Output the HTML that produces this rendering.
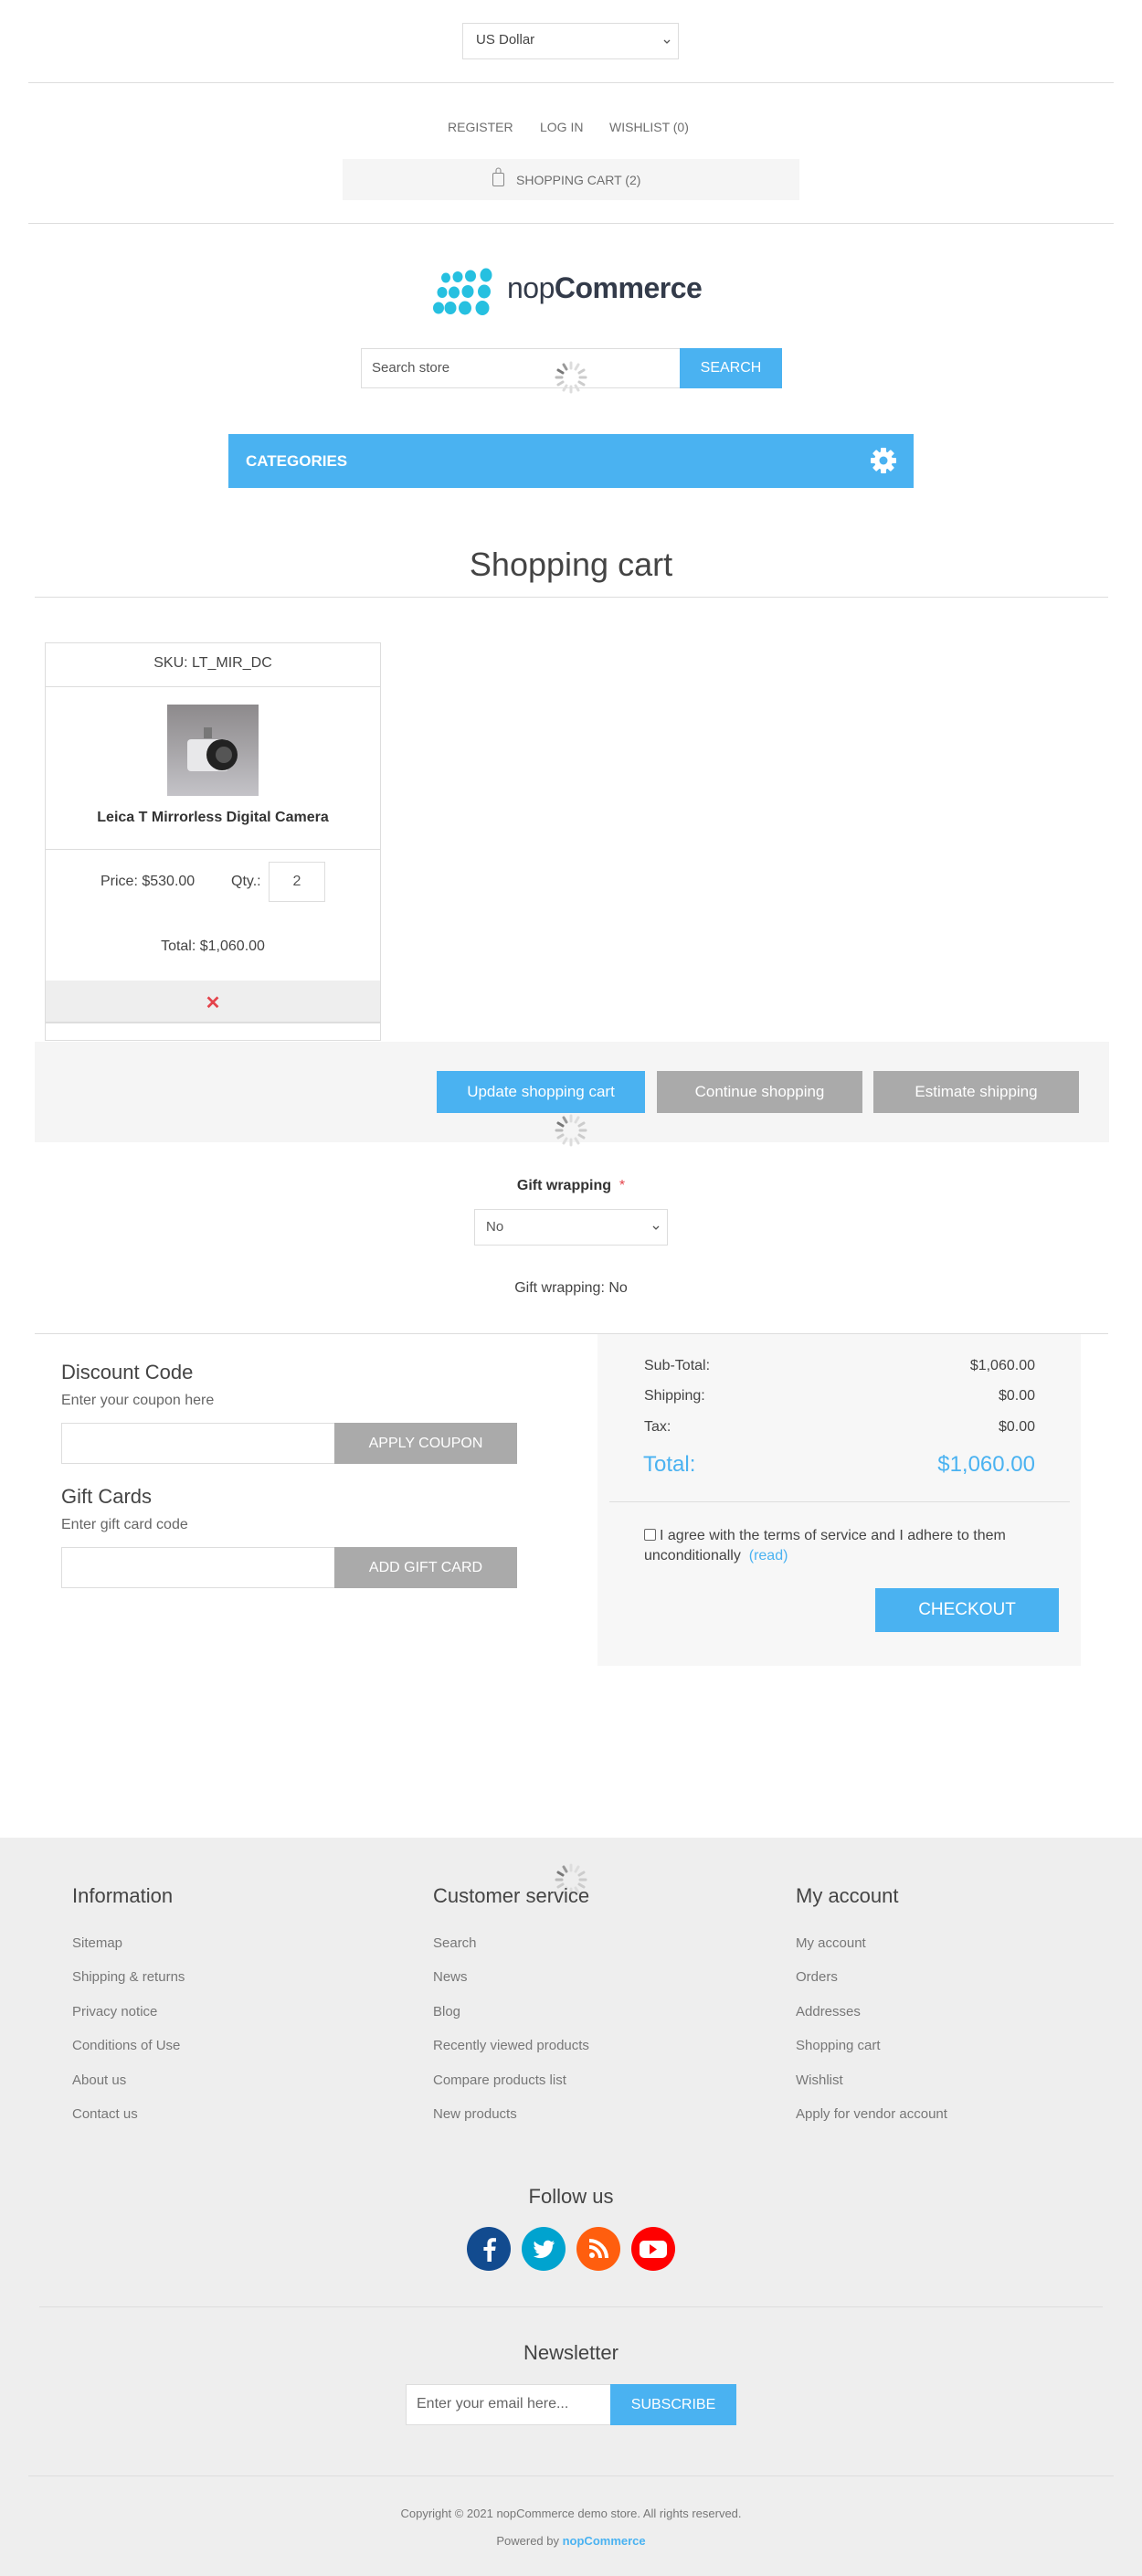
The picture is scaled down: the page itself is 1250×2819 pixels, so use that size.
<!DOCTYPE html>
<html><head><meta charset="utf-8"><style>
*{box-sizing:border-box;margin:0;padding:0}
body{width:1250px;height:2819px;position:relative;background:#fff;font-family:"Liberation Sans",Arial,sans-serif;color:#444;font-size:14px;overflow:hidden}
.a{position:absolute}
.hr{position:absolute;height:1px;background:#ddd}
.c{text-align:center}
.btn{position:absolute;color:#fff;display:flex;align-items:center;justify-content:center;font-size:15px}
.blue{background:#4ab2f1}
.grey{background:#aaa}
.inp{position:absolute;border:1px solid #ddd;background:#fff}
.fl{position:absolute;font-size:15px;color:#777}
.fh{position:absolute;font-size:22px;color:#444;top:2062px}
</style></head><body>

<div class="inp" style="left:506px;top:25px;width:237px;height:40px;border-color:#ddd"></div>
<div class="a" style="left:521px;top:35px;font-size:15px;color:#444">US Dollar</div>
<svg class="a" style="left:725px;top:41px" width="10" height="10"><path d="M2 3l3 3 3-3" stroke="#555" stroke-width="1.3" fill="none"/></svg>
<div class="hr" style="left:31px;top:90px;width:1188px"></div>

<div class="a" style="left:490px;top:131px;font-size:14px;color:#6e6e6e">REGISTER</div>
<div class="a" style="left:591px;top:131px;font-size:14px;color:#6e6e6e">LOG IN</div>
<div class="a" style="left:667px;top:131px;font-size:14px;color:#6e6e6e">WISHLIST (0)</div>

<div class="a" style="left:375px;top:174px;width:500px;height:45px;background:#f5f5f5"></div>
<svg class="a" style="left:538px;top:183px" width="16" height="22"><rect x="1.5" y="6.5" width="12" height="14" rx="1.5" fill="none" stroke="#888"/><path d="M5 7V3.5a2.5 2.5 0 0 1 5 0V7" fill="none" stroke="#888"/></svg>
<div class="a" style="left:565px;top:189px;font-size:14px;color:#6e6e6e">SHOPPING CART (2)</div>
<div class="hr" style="left:31px;top:244px;width:1188px"></div>

<svg class="a" style="left:470px;top:292px" width="80" height="58">
<g fill="#26c0e0">
<ellipse cx="18" cy="12" rx="5" ry="5.5"/><ellipse cx="31" cy="11" rx="5.5" ry="6"/><ellipse cx="45" cy="10" rx="6" ry="6.5"/><ellipse cx="62" cy="9" rx="6.5" ry="7.5"/>
<ellipse cx="14" cy="28" rx="5.5" ry="6"/><ellipse cx="27" cy="28" rx="6" ry="6.5"/><ellipse cx="42" cy="27" rx="6.5" ry="7"/><ellipse cx="60" cy="27" rx="7" ry="7.5"/>
<ellipse cx="10" cy="45" rx="6" ry="6.5"/><ellipse cx="23" cy="45" rx="6.5" ry="7"/><ellipse cx="39" cy="45" rx="7" ry="7.5"/><ellipse cx="58" cy="45" rx="7.5" ry="8"/>
</g></svg>
<div class="a" style="left:555px;top:297px;font-size:32px;color:#333b4a;letter-spacing:-0.5px"><span>nop</span><b>Commerce</b></div>

<div class="inp" style="left:395px;top:381px;width:350px;height:44px"></div>
<div class="a" style="left:407px;top:394px;font-size:15px;color:#555">Search store</div>
<div class="btn blue" style="left:744px;top:381px;width:112px;height:44px;font-size:16px">SEARCH</div>

<svg class="a" style="left:605px;top:393px" width="40" height="40" id="sp"><g stroke-width="3" stroke-linecap="round">
<line x1="20" y1="4" x2="20" y2="10" stroke="#ddd"/><line x1="28" y1="6" x2="25" y2="11" stroke="#ddd"/><line x1="34" y1="12" x2="29" y2="15" stroke="#ccc"/><line x1="36" y1="20" x2="30" y2="20" stroke="#ccc"/><line x1="34" y1="28" x2="29" y2="25" stroke="#ccc"/><line x1="28" y1="34" x2="25" y2="29" stroke="#ddd"/><line x1="20" y1="36" x2="20" y2="30" stroke="#ddd"/><line x1="12" y1="34" x2="15" y2="29" stroke="#ddd"/><line x1="6" y1="28" x2="11" y2="25" stroke="#ccc"/><line x1="4" y1="20" x2="10" y2="20" stroke="#bbb"/><line x1="6" y1="12" x2="11" y2="15" stroke="#777"/><line x1="12" y1="6" x2="15" y2="11" stroke="#999"/></g></svg>

<div class="a" style="left:250px;top:475px;width:750px;height:59px;background:#4ab2f1"></div>
<div class="a" style="left:269px;top:495px;font-size:17px;font-weight:bold;color:#fff">CATEGORIES</div>
<svg class="a" style="left:951px;top:488px" width="32" height="32" viewBox="0 0 32 32"><g fill="#fff"><circle cx="16" cy="16" r="10"/><rect x="13" y="2" width="6" height="28" rx="1"/><rect x="2" y="13" width="28" height="6" rx="1"/><rect x="13" y="2" width="6" height="28" rx="1" transform="rotate(45 16 16)"/><rect x="13" y="2" width="6" height="28" rx="1" transform="rotate(-45 16 16)"/></g><circle cx="16" cy="16" r="4.5" fill="#4ab2f1"/></svg>

<div class="a c" style="left:0;top:597px;width:1250px;font-size:36px;color:#444">Shopping cart</div>
<div class="hr" style="left:38px;top:653px;width:1175px"></div>

<div class="a" style="left:49px;top:703px;width:368px;height:436px;border:1px solid #ddd"></div>
<div class="hr" style="left:50px;top:751px;width:366px"></div>
<div class="a c" style="left:49px;top:717px;width:368px;font-size:16px;color:#444">SKU: LT_MIR_DC</div>
<svg class="a" style="left:183px;top:771px" width="100" height="100"><defs><linearGradient id="g" x1="0" y1="0" x2="0" y2="1"><stop offset="0" stop-color="#8d8a8c"/><stop offset="0.5" stop-color="#a7a5a8"/><stop offset="1" stop-color="#c4c3c8"/></linearGradient></defs><rect width="100" height="100" fill="url(#g)"/><rect x="40" y="25" width="9" height="12" fill="#777"/><rect x="22" y="38" width="45" height="35" rx="4" fill="#e8e8ea"/><circle cx="60" cy="55" r="17" fill="#222"/><circle cx="62" cy="55" r="9" fill="#555"/></svg>
<div class="a c" style="left:49px;top:886px;width:368px;font-size:16px;font-weight:bold;color:#333">Leica T Mirrorless Digital Camera</div>
<div class="hr" style="left:50px;top:929px;width:366px"></div>
<div class="a" style="left:110px;top:956px;font-size:16px;color:#444">Price: $530.00</div>
<div class="a" style="left:253px;top:956px;font-size:16px;color:#444">Qty.:</div>
<div class="inp" style="left:294px;top:943px;width:62px;height:44px"></div>
<div class="a c" style="left:294px;top:956px;width:62px;font-size:16px;color:#555">2</div>
<div class="a c" style="left:49px;top:1027px;width:368px;font-size:16px;color:#444">Total: $1,060.00</div>
<div class="a" style="left:50px;top:1073px;width:366px;height:47px;background:#eee;border-bottom:2px solid #ddd"></div>
<div class="a c" style="left:49px;top:1085px;width:368px;font-size:20px;font-weight:bold;color:#e4434b">✕</div>

<div class="a" style="left:38px;top:1140px;width:1176px;height:110px;background:#f5f5f5"></div>
<div class="btn blue" style="left:478px;top:1172px;width:228px;height:46px;font-size:17px">Update shopping cart</div>
<div class="btn grey" style="left:719px;top:1172px;width:225px;height:46px;font-size:17px">Continue shopping</div>
<div class="btn grey" style="left:956px;top:1172px;width:225px;height:46px;font-size:17px">Estimate shipping</div>
<svg class="a" style="left:605px;top:1217px" width="40" height="40"><use href="#sp"/></svg>

<div class="a c" style="left:0;top:1289px;width:1250px;font-size:16px;font-weight:bold;color:#333">Gift wrapping <span style="color:#e4434b;font-weight:normal">&nbsp;*</span></div>
<div class="inp" style="left:519px;top:1323px;width:212px;height:40px"></div>
<div class="a" style="left:532px;top:1334px;font-size:15px;color:#555">No</div>
<svg class="a" style="left:713px;top:1339px" width="10" height="10"><path d="M2 3l3 3 3-3" stroke="#555" stroke-width="1.3" fill="none"/></svg>
<div class="a c" style="left:0;top:1401px;width:1250px;font-size:16px;color:#444">Gift wrapping: No</div>
<div class="hr" style="left:38px;top:1459px;width:1175px"></div>

<div class="a" style="left:67px;top:1489px;font-size:22px;color:#444">Discount Code</div>
<div class="a" style="left:67px;top:1524px;font-size:16px;color:#666">Enter your coupon here</div>
<div class="inp" style="left:67px;top:1557px;width:300px;height:45px"></div>
<div class="btn grey" style="left:366px;top:1557px;width:200px;height:45px;font-size:16px">APPLY COUPON</div>
<div class="a" style="left:67px;top:1625px;font-size:22px;color:#444">Gift Cards</div>
<div class="a" style="left:67px;top:1660px;font-size:16px;color:#666">Enter gift card code</div>
<div class="inp" style="left:67px;top:1693px;width:300px;height:45px"></div>
<div class="btn grey" style="left:366px;top:1693px;width:200px;height:45px;font-size:16px">ADD GIFT CARD</div>

<div class="a" style="left:654px;top:1460px;width:529px;height:363px;background:#f7f7f7"></div>
<div class="a" style="left:705px;top:1486px;font-size:16px;color:#444">Sub-Total:</div>
<div class="a" style="left:905px;top:1486px;width:228px;text-align:right;font-size:16px;color:#444">$1,060.00</div>
<div class="a" style="left:705px;top:1519px;font-size:16px;color:#444">Shipping:</div>
<div class="a" style="left:905px;top:1519px;width:228px;text-align:right;font-size:16px;color:#444">$0.00</div>
<div class="a" style="left:705px;top:1553px;font-size:16px;color:#444">Tax:</div>
<div class="a" style="left:905px;top:1553px;width:228px;text-align:right;font-size:16px;color:#444">$0.00</div>
<div class="a" style="left:704px;top:1589px;font-size:24px;color:#4ab2f1">Total:</div>
<div class="a" style="left:905px;top:1589px;width:228px;text-align:right;font-size:24px;color:#4ab2f1">$1,060.00</div>
<div class="hr" style="left:667px;top:1643px;width:504px"></div>
<div class="a" style="left:705px;top:1670px;width:405px;font-size:16px;line-height:22px;color:#444"><span style="display:inline-block;width:13px;height:13px;border:1px solid #666;border-radius:2px;vertical-align:-1px;background:#fff;margin-right:4px"></span>I agree with the terms of service and I adhere to them unconditionally &nbsp;<span style="color:#4ab2f1">(read)</span></div>
<div class="btn blue" style="left:958px;top:1738px;width:201px;height:48px;font-size:19px">CHECKOUT</div>

<div class="a" style="left:0;top:2011px;width:1250px;height:808px;background:#eee"></div>
<svg class="a" style="left:605px;top:2037px" width="40" height="40"><use href="#sp"/></svg>
<div class="fh" style="left:79px">Information</div>
<div class="fh" style="left:474px">Customer service</div>
<div class="fh" style="left:871px">My account</div>
<div class="fl" style="left:79px;top:2118px">Sitemap</div>
<div class="fl" style="left:79px;top:2155px">Shipping &amp; returns</div>
<div class="fl" style="left:79px;top:2193px">Privacy notice</div>
<div class="fl" style="left:79px;top:2230px">Conditions of Use</div>
<div class="fl" style="left:79px;top:2268px">About us</div>
<div class="fl" style="left:79px;top:2305px">Contact us</div>
<div class="fl" style="left:474px;top:2118px">Search</div>
<div class="fl" style="left:474px;top:2155px">News</div>
<div class="fl" style="left:474px;top:2193px">Blog</div>
<div class="fl" style="left:474px;top:2230px">Recently viewed products</div>
<div class="fl" style="left:474px;top:2268px">Compare products list</div>
<div class="fl" style="left:474px;top:2305px">New products</div>
<div class="fl" style="left:871px;top:2118px">My account</div>
<div class="fl" style="left:871px;top:2155px">Orders</div>
<div class="fl" style="left:871px;top:2193px">Addresses</div>
<div class="fl" style="left:871px;top:2230px">Shopping cart</div>
<div class="fl" style="left:871px;top:2268px">Wishlist</div>
<div class="fl" style="left:871px;top:2305px">Apply for vendor account</div>

<div class="a c" style="left:0;top:2391px;width:1250px;font-size:22px;color:#444">Follow us</div>
<svg class="a" style="left:511px;top:2437px" width="230" height="48">
<circle cx="24" cy="24" r="24" fill="#124b8f"/><path d="M27 38V26h4l.6-4.5H27v-3c0-1.3.4-2.2 2.2-2.2H32v-4a33 33 0 0 0-3.6-.2c-3.6 0-6 2.2-6 6.2v3.7h-4V26h4v12z" fill="#fff"/>
<circle cx="84" cy="24" r="24" fill="#00a3cf"/><path d="M96 17c-.9.4-1.8.6-2.8.8 1-.6 1.8-1.5 2.1-2.7-.9.6-2 1-3.1 1.2a4.8 4.8 0 0 0-8.2 4.4c-4-.2-7.5-2.1-9.9-5-1.3 2.3-.4 5 1.5 6.4-.8 0-1.5-.2-2.2-.6 0 2.4 1.7 4.3 3.9 4.8-.7.2-1.5.2-2.2.1.6 1.9 2.4 3.3 4.5 3.3A9.7 9.7 0 0 1 72.9 32a13.7 13.7 0 0 0 21-12.2c1-.7 1.7-1.6 2.1-2.8z" fill="#fff"/>
<circle cx="144" cy="24" r="24" fill="#ff5e0e"/><circle cx="137" cy="31" r="3" fill="#fff"/><path d="M134 22a12 12 0 0 1 12 12M134 15a19 19 0 0 1 19 19" stroke="#fff" stroke-width="4" fill="none"/>
<circle cx="204" cy="24" r="24" fill="#ff0000"/><rect x="189" y="15" width="30" height="19" rx="5" fill="#fff"/><path d="M200 19v11l8-5.5z" fill="#f00"/>
</svg>
<div class="hr" style="left:43px;top:2524px;width:1164px;background:#ddd"></div>
<div class="a c" style="left:0;top:2562px;width:1250px;font-size:22px;color:#444">Newsletter</div>
<div class="inp" style="left:444px;top:2609px;width:225px;height:45px"></div>
<div class="a" style="left:456px;top:2622px;font-size:16px;color:#666">Enter your email here...</div>
<div class="btn blue" style="left:668px;top:2609px;width:138px;height:45px;font-size:16px">SUBSCRIBE</div>
<div class="hr" style="left:31px;top:2709px;width:1188px"></div>
<div class="a c" style="left:0;top:2743px;width:1250px;font-size:13px;color:#777">Copyright © 2021 nopCommerce demo store. All rights reserved.</div>
<div class="a c" style="left:0;top:2773px;width:1250px;font-size:13px;color:#777">Powered by <b style="color:#4ab2f1">nopCommerce</b></div>
</body></html>
